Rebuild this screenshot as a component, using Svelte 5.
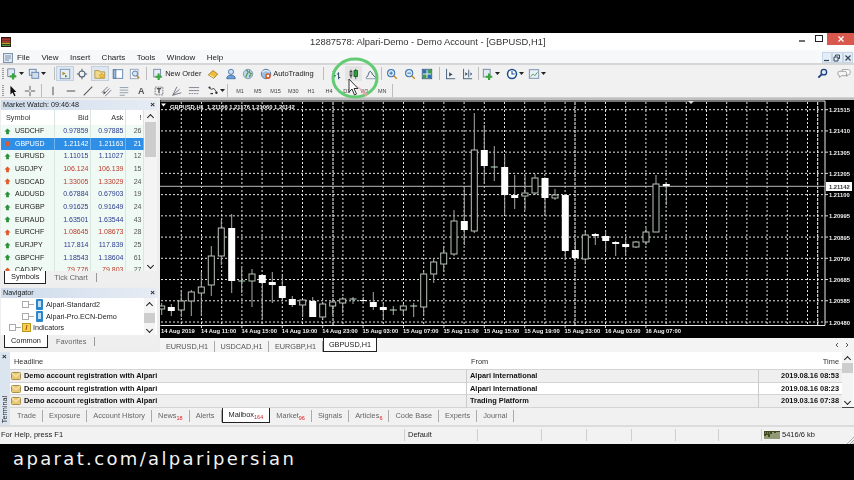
<script>
  const watch = [
    ['USDCHF','0.97859','0.97885','26','up','blue'],
    ['GBPUSD','1.21142','1.21163','21','down','sel'],
    ['EURUSD','1.11015','1.11027','12','up','blue'],
    ['USDJPY','106.124','106.139','15','down','red'],
    ['USDCAD','1.33005','1.33029','24','down','red'],
    ['AUDUSD','0.67884','0.67903','19','up','blue'],
    ['EURGBP','0.91625','0.91649','24','up','blue'],
    ['EURAUD','1.63501','1.63544','43','up','blue'],
    ['EURCHF','1.08645','1.08673','28','down','red'],
    ['EURJPY','117.814','117.839','25','up','blue'],
    ['GBPCHF','1.18543','1.18604','61','up','blue'],
    ['CADJPY','79.776','79.803','27','down','red']
  ];
  const mail = [
    ['Demo account registration with Alpari','Alpari International','2019.08.16 08:53'],
    ['Demo account registration with Alpari','Alpari International','2019.08.16 08:23'],
    ['Demo account registration with Alpari','Trading Platform','2019.03.16 07:38']
  ];
  const termTabs = [
    ['Trade',''],['Exposure',''],['Account History',''],['News','18'],['Alerts',''],['Mailbox','164'],
    ['Market','96'],['Signals',''],['Articles','6'],['Code Base',''],['Experts',''],['Journal','']
  ];
  const tf = ['M1','M5','M15','M30','H1','H4','D1','W1','MN'];

  // [x, high, bodyTop, bodyBottom, low, kind]  kind: w=filled, h=hollow, d=doji
  const candles = [
    [161.7,303,306,309,315,'h'],[171.3,304,307,311,316,'w'],[181.3,290,301,310,317,'h'],
    [191.3,290,292,301,316,'h'],[201.3,272,287,293,316,'h'],[211.3,246,256,285,296,'h'],
    [221.3,220,228,256,265,'h'],[231.7,214,228,281,293,'w'],[241.7,268,281,281,293,'d'],
    [252,269,274,281,307,'h'],[262.3,274,275,283,319,'w'],[272.3,272,282,285,303,'w'],
    [282.3,276,286,298,299,'w'],[292.3,296,299,305,307,'w'],[302.7,300,300,305,317,'h'],
    [312.7,297,301,317,317,'w'],[322.7,303,304,317,318,'h'],[332.7,300,302,306,315,'h'],
    [342.7,297,299,303,313,'h'],[353,297,299,300,304,'d'],[363.3,297,300,301,302,'w'],
    [373.3,292,302,307,310,'w'],[383.3,303,307,310,318,'w'],[393.3,306,310,310,315,'d'],
    [403.3,304,306,310,315,'h'],[413.7,303,306,306,317,'d'],[423.7,272,274,307,315,'h'],
    [433.7,258,262,274,283,'h'],[443.7,246,253,264,272,'h'],[454,210,221,254,256,'h'],
    [464.3,188,221,230,245,'w'],[474.3,113,150,231,233,'h'],[484.3,125,150,166,183,'w'],
    [494.3,146,167,167,181,'d'],[504.7,155,167,195,215,'w'],[514.7,175,195,198,209,'w'],
    [525,175,193,196,210,'h'],[535,174,178,193,195,'h'],[545,177,178,198,216,'w'],
    [555,189,195,198,200,'h'],[565.3,194,195,251,258,'w'],[575.3,241,250,258,260,'w'],
    [585.3,231,235,259,262,'h'],[595.3,233,234,236,245,'w'],[605.7,230,236,241,251,'w'],
    [615.7,241,242,244,256,'w'],[625.7,238,244,247,255,'w'],[636,241,242,247,248,'h'],
    [646,228,232,242,245,'h'],[656,175,184,232,232,'h'],[666.3,183,184,186,205,'w']
  ];
  const gridX = Array.from({ length: 32 }, (_, i) => 181.3 + i * 20.2);
  const seps = [333, 575, 817.7];
  const prices = ['1.21515','1.21410','1.21305','1.21205','1.21100','1.20995','1.20895','1.20790','1.20685','1.20585','1.20480'];
  const gridY = prices.map((_, i) => 109.7 + i * 21.23);
  const times = ['14 Aug 11:00','14 Aug 15:00','14 Aug 19:00','14 Aug 23:00','15 Aug 03:00','15 Aug 07:00','15 Aug 11:00','15 Aug 15:00','15 Aug 19:00','15 Aug 23:00','16 Aug 03:00','16 Aug 07:00'];
</script>

{#snippet arrow(c)}
  <svg class="arrow" viewBox="0 0 8 8"><path d="M4 .5 7.500 4H5.600v3H2.400V4H.5z" fill={c === 'up' ? '#2f8f3a' : '#e0592a'} /></svg>
{/snippet}

{#snippet caret()}
  <svg class="caret" viewBox="0 0 5 3"><path d="M0 0h5L2.500 3z" fill="#222" /></svg>
{/snippet}

<div class="screen">
  <div class="window">
    <header class="title">
      <svg class="logo" viewBox="0 0 12 12">
        <rect width="12" height="12" fill="#2a1c14" />
        <path d="M1 2.500h10M1 5h10" stroke="#d9413a" stroke-width="1.500" />
        <path d="M1 7.500h10" stroke="#e2b12f" stroke-width="1.500" />
        <path d="M1 10h10" stroke="#4aa04a" stroke-width="1.500" />
      </svg>
      <span class="title-text">12887578: Alpari-Demo - Demo Account - [GBPUSD,H1]</span>
      <div class="win-btns">
        <span class="wb"><svg viewBox="0 0 10 10"><path d="M2 7h6" stroke="#222" stroke-width="1.300" /></svg></span>
        <span class="wb"><svg viewBox="0 0 10 10"><rect x="1.500" y="1.500" width="7" height="6" fill="none" stroke="#222" /></svg></span>
        <span class="wb close"><svg viewBox="0 0 10 10"><path d="M2.500 2.500l5 5m0-5l-5 5" stroke="#fff" stroke-width="1.300" /></svg></span>
      </div>
    </header>

    <nav class="menu">
      <svg class="doc" viewBox="0 0 10 10"><rect x=".5" y=".5" width="9" height="9" fill="#dde6f2" stroke="#7f93ad" /><path d="M2 3h6M2 5h6M2 7h4" stroke="#7f93ad" /></svg>
      <span>File</span><span>View</span><span>Insert</span><span>Charts</span><span>Tools</span><span>Window</span><span>Help</span>
      <div class="mdi">
        <span><svg viewBox="0 0 8 8"><path d="M1 6.500h5" stroke="#345" stroke-width="1.200" /></svg></span>
        <span><svg viewBox="0 0 8 8"><path d="M2.500 2.500V1h4v3.500H5M1 3h4v4H1z" fill="none" stroke="#345" /></svg></span>
        <span><svg viewBox="0 0 8 8"><path d="M1.500 1.500l5 5m0-5l-5 5" stroke="#345" stroke-width="1.200" /></svg></span>
      </div>
    </nav>

    <div class="bar bar1">
      <i class="grip"></i>
      <span class="b w20"><svg viewBox="0 0 14 14"><path d="M2 1h8v9H2z" fill="#dfe8f3" stroke="#6a7f9b" /><path d="M7 6h2.500V8.500H12V11H9.500v2.500H7V11H4.500V8.500H7z" fill="#38a63c" /></svg>{@render caret()}</span>
      <span class="b w20 ml2"><svg viewBox="0 0 14 14"><rect x="1.500" y="1.500" width="8" height="7" fill="#dfe8f3" stroke="#5d7da5" /><rect x="4.500" y="5" width="8" height="7" fill="#cfdcec" stroke="#5d7da5" /></svg>{@render caret()}</span>
      <i class="sep s1"></i>
      <span class="b on"><svg viewBox="0 0 14 14"><rect x="1.500" y="1.500" width="11" height="11" fill="#e6eef7" stroke="#7590b0" /><path d="M4 4.500l4 2-4 2z" fill="#b98a2a" /><path d="M7 8l3 1.500L7 11z" fill="#3a9a3f" /></svg></span>
      <span class="b"><svg viewBox="0 0 14 14"><circle cx="7" cy="7" r="3.500" fill="none" stroke="#4e5e70" stroke-width="1.200" /><path d="M7 1v3M7 10v3M1 7h3M10 7h3" stroke="#4e5e70" stroke-width="1.200" /></svg></span>
      <span class="b on"><svg viewBox="0 0 14 14"><path d="M1 3h5l1 1.500h5.500V12H1z" fill="#f2d98a" stroke="#b5923c" /><path d="M9 6l1 2 2 .3-1.500 1.400.4 2L9 10.800l-1.900.9.4-2L6 8.300 8 8z" fill="#f6c63c" stroke="#a87f20" stroke-width=".5" /></svg></span>
      <span class="b"><svg viewBox="0 0 14 14"><rect x="1.500" y="2" width="11" height="10" fill="#fff" stroke="#5378a8" /><rect x="1.500" y="2" width="3" height="10" fill="#9cb9dc" stroke="#5378a8" /></svg></span>
      <span class="b"><svg viewBox="0 0 14 14"><rect x="1.500" y="1.500" width="9" height="11" fill="#f3f6fa" stroke="#8ba0b8" /><circle cx="7" cy="6.500" r="3" fill="#d8e8f6" stroke="#4b6f96" /><path d="M9 9l3 3" stroke="#b9862a" stroke-width="1.500" /></svg></span>
      <i class="sep s2"></i>
      <span class="b txt wOrder"><svg viewBox="0 0 14 14"><rect x="2" y="1.500" width="8" height="9" fill="#e4ecf5" stroke="#6f86a3" /><path d="M6.500 6.500h2.500V9h2.500v2.500H9V14H6.500v-2.500H4V9h2.500z" fill="#38a63c" /></svg><em>New Order</em></span>
      <span class="b"><svg viewBox="0 0 14 14"><path d="M1.500 8 7 3l5.500 4L8 12z" fill="#eebf3e" stroke="#a87c1f" /><path d="M3 8l5 3" stroke="#fff1b8" /></svg></span>
      <span class="b"><svg viewBox="0 0 14 14"><circle cx="7" cy="4.500" r="3" fill="#cfe0f3" stroke="#3d6ea8" /><path d="M2 12.500c0-3 2-4 5-4s5 1 5 4z" fill="#6fa0d8" stroke="#3d6ea8" /></svg></span>
      <span class="b"><svg viewBox="0 0 14 14"><circle cx="7" cy="7" r="5.500" fill="#bcd6ec" stroke="#7a93aa" /><path d="M5 2.500c2 1 2.500 2.500 1.500 4S4 8.500 5 11M9 3c-1 2 0 3 2.500 3.500M9 11c-.5-1.500 0-3 2-3" fill="none" stroke="#55964c" stroke-width="1.400" /></svg></span>
      <span class="b txt wAuto"><svg viewBox="0 0 14 14"><circle cx="7" cy="7" r="5.500" fill="#9cc0e2" stroke="#44719f" /><path d="M2.500 5c3-2.500 6-2.500 9 0" fill="none" stroke="#e9f2fa" stroke-width="1.500" /><rect x="6" y="6" width="6.500" height="6.500" rx="3" fill="#df5b2c" /><rect x="8" y="8" width="2.500" height="2.500" fill="#fff" /></svg><em>AutoTrading</em></span>
      <i class="sep s3"></i>
      <span class="b"><svg viewBox="0 0 14 14"><path d="M5 2v9M5 4H3M5 9h2M10 5v8M10 7H8M10 11h2" stroke="#33506f" stroke-width="1.200" fill="none" /></svg></span>
      <span class="b hot"><svg viewBox="0 0 14 14"><path d="M3.500 2v10" stroke="#333" /><rect x="2.500" y="4" width="2" height="5" fill="#fff" stroke="#333" /><path d="M9 1v12" stroke="#145f20" /><rect x="7" y="3" width="4" height="7" fill="#2c9e39" stroke="#145f20" /></svg></span>
      <span class="b"><svg viewBox="0 0 14 14"><path d="M1 11c3 0 3-7 5-7s3 6 7 7" fill="none" stroke="#33506f" stroke-width="1.100" /><path d="M1 12.500h12" stroke="#7f93ad" /></svg></span>
      <i class="sep s4"></i>
      <span class="b"><svg viewBox="0 0 14 14"><circle cx="6" cy="6" r="4.200" fill="#d8e9f8" stroke="#3f76b5" stroke-width="1.200" /><path d="M4 6h4M6 4v4" stroke="#2b5f9e" /><path d="M9 9l3.500 3.500" stroke="#c1902c" stroke-width="1.800" /></svg></span>
      <span class="b"><svg viewBox="0 0 14 14"><circle cx="6" cy="6" r="4.200" fill="#d8e9f8" stroke="#3f76b5" stroke-width="1.200" /><path d="M4 6h4" stroke="#2b5f9e" /><path d="M9 9l3.500 3.500" stroke="#c1902c" stroke-width="1.800" /></svg></span>
      <span class="b"><svg viewBox="0 0 14 14"><rect x="1.500" y="1.500" width="11" height="11" fill="#fff" stroke="#2f4f74" /><rect x="2" y="2" width="4.500" height="4.500" fill="#2e6fb8" /><rect x="7.500" y="2" width="4.500" height="4.500" fill="#3d9f4b" /><rect x="2" y="7.500" width="4.500" height="4.500" fill="#3d9f4b" /><rect x="7.500" y="7.500" width="4.500" height="4.500" fill="#2e6fb8" /></svg></span>
      <i class="sep s5"></i>
      <span class="b"><svg viewBox="0 0 14 14"><path d="M3 1v12M3 12.500h10" stroke="#33506f" /><path d="M6 5l4 2.500-4 2.500z" fill="#33506f" /></svg></span>
      <span class="b"><svg viewBox="0 0 14 14"><path d="M3 1v12M3 12.500h10M9 2v9" stroke="#33506f" /><path d="M5 5l3 2-3 2zM11 5l2 2-2 2z" fill="#33506f" /></svg></span>
      <i class="sep s8"></i>
      <span class="b w22"><svg viewBox="0 0 14 14"><rect x="1.500" y="1.500" width="8" height="9" fill="#dfe8f3" stroke="#6a7f9b" /><path d="M7 6.500h2.500V9H12v2.500H9.500V14H7v-2.500H4.500V9H7z" fill="#38a63c" /></svg>{@render caret()}</span>
      <span class="b w22 ml2"><svg viewBox="0 0 14 14"><circle cx="7" cy="7" r="5.200" fill="#fff" stroke="#1c4f93" stroke-width="1.800" /><path d="M7 3.500V7h3" stroke="#1c4f93" stroke-width="1.300" fill="none" /></svg>{@render caret()}</span>
      <span class="b w22"><svg viewBox="0 0 14 14"><rect x="1.500" y="2" width="11" height="10" fill="#e7eef6" stroke="#6d87a6" /><path d="M3 10l3-3 2 2 3-4" fill="none" stroke="#4d8f4f" /></svg>{@render caret()}</span>
      <span class="spring"></span>
      <svg class="mag" viewBox="0 0 12 12"><circle cx="7.500" cy="4.500" r="3" fill="#dbe9f7" stroke="#173e7d" stroke-width="1.400" /><path d="M5 7l-3.500 3.500" stroke="#173e7d" stroke-width="2" /></svg>
      <svg class="chat" viewBox="0 0 16 12"><path d="M6 1.500h7a2 2 0 0 1 2 2v2a2 2 0 0 1-2 2h-1l-1 2v-2H6z" fill="#fff" stroke="#9b9b9b" /><path d="M3 3.500h6a2 2 0 0 1 2 2v1a2 2 0 0 1-2 2H5l-2 2v-2a2 2 0 0 1-2-2v-1a2 2 0 0 1 2-2z" fill="#f4f4f4" stroke="#9b9b9b" /></svg>
    </div>

    <div class="bar bar2">
      <i class="grip"></i>
      <span class="b"><svg viewBox="0 0 14 14"><path d="M4 1v10l2.500-2.300L8.500 13l1.500-.7-2-4.200H11z" fill="#111" /></svg></span>
      <span class="b"><svg viewBox="0 0 14 14"><path d="M7 1v5M7 8v5M1 7h5M8 7h5" stroke="#444" /></svg></span>
      <i class="sep s6"></i>
      <span class="b"><svg viewBox="0 0 14 14"><path d="M7 2v10" stroke="#555" stroke-width="1.200" /></svg></span>
      <span class="b"><svg viewBox="0 0 14 14"><path d="M2 7h10" stroke="#555" stroke-width="1.200" /></svg></span>
      <span class="b"><svg viewBox="0 0 14 14"><path d="M2 12 12 2" stroke="#555" stroke-width="1.200" /></svg></span>
      <span class="b"><svg viewBox="0 0 14 14"><path d="M2 9l7-7M4 11l7-7M6 13l7-7" stroke="#667" /><circle cx="5" cy="9" r="1.300" fill="#555" /></svg></span>
      <span class="b"><svg viewBox="0 0 14 14"><path d="M2 3h10M2 6h10M2 9h10M2 12h6" stroke="#8593a3" /></svg></span>
      <span class="b"><b class="glyph">A</b></span>
      <span class="b"><svg viewBox="0 0 14 14"><rect x="2.500" y="2.500" width="9" height="9" fill="none" stroke="#667" stroke-dasharray="2 1" /><path d="M4.500 4.500h5M7 4.500v5" stroke="#222" stroke-width="1.200" /></svg></span>
      <span class="b"><svg viewBox="0 0 14 14"><path d="M2 12l5-10M2 12l8-7M2 12l10-3" stroke="#667" /></svg></span>
      <span class="b"><svg viewBox="0 0 14 14"><path d="M1 3h12M1 6.500h12" stroke="#778" /><path d="M1 10h12" stroke="#778" stroke-dasharray="2 1" /></svg></span>
      <span class="b w22 ml2"><svg viewBox="0 0 14 14"><path d="M2 3l3 2 3-1 3 4" fill="none" stroke="#333" /><circle cx="3" cy="3" r="1.200" fill="#333" /><circle cx="11" cy="9" r="1.400" fill="#333" /><path d="M4 10h3" stroke="#333" stroke-width="1.500" /></svg>{@render caret()}</span>
      <i class="sep s7"></i>
      {#each tf as t}<span class="b tf">{t}</span>{/each}
      <i class="sep"></i>
    </div>

    <div class="main">
      <aside class="left">
        <section class="mw">
          <div class="ptitle"><span>Market Watch: 09:46:48</span><b>×</b></div>
          <div class="tbl-wrap">
            <div class="tbl">
              <div class="row head"><span class="sym">Symbol</span><span>Bid</span><span>Ask</span><span>!</span></div>
              {#each watch as r}
                <div class="row" class:selected={r[5] === 'sel'}>
                  <span class="sym">{@render arrow(r[4])}{r[0]}</span>
                  <span class={r[5]}>{r[1]}</span>
                  <span class={r[5]}>{r[2]}</span>
                  <span class="sp">{r[3]}</span>
                </div>
              {/each}
            </div>
            <div class="scroll"><i class="up"></i><i class="thumb t1"></i><i class="dn"></i></div>
          </div>
          <div class="ptabs"><span class="act">Symbols</span><span>Tick Chart</span><i></i></div>
        </section>
        <section class="nav">
          <div class="ptitle"><span>Navigator</span><b>×</b></div>
          <div class="tree-wrap">
            <div class="tree">
              <div class="node l2"><i class="plus"></i><i class="dash"></i><svg viewBox="0 0 9 11"><rect x="1" width="7" height="11" rx="1" fill="#2e86c8" /><rect x="3" y="2" width="3" height="6" fill="#bfe0f5" /></svg><span>Alpari-Standard2</span></div>
              <div class="node l2"><i class="plus"></i><i class="dash"></i><svg viewBox="0 0 9 11"><rect x="1" width="7" height="11" rx="1" fill="#2e86c8" /><rect x="3" y="2" width="3" height="6" fill="#bfe0f5" /></svg><span>Alpari-Pro.ECN-Demo</span></div>
              <div class="node l1"><i class="plus"></i><i class="dash"></i><svg viewBox="0 0 9 11"><rect x=".5" y="1.500" width="8" height="8" fill="#f5d24c" stroke="#b99622" /><path d="M4 8l1-5" stroke="#a34a10" /></svg><span>Indicators</span></div>
            </div>
            <div class="scroll"><i class="up"></i><i class="thumb t2"></i><i class="dn"></i></div>
          </div>
          <div class="ptabs"><span class="act">Common</span><span>Favorites</span><i></i></div>
        </section>
      </aside>

      <section class="chartcol">
        <svg class="chart" viewBox="160 98 694 240">
          <rect x="160" y="98" width="694" height="240" fill="#000" />
          <path d="M160 99h694" stroke="#fff" stroke-width="1.500" />
          {#each gridX as x}<line x1={x} x2={x} y1="102" y2="325" class="grid" />{/each}
          {#each gridY as y}<line x1="161" x2="825" y1={y} y2={y} class="grid" />{/each}
          {#each seps as x}<line x1={x} x2={x} y1="102" y2="325" class="sepl" />{/each}
          <line x1="160" x2="825" y1="186.300" y2="186.300" stroke="#b9b9b9" />
          {#each candles as [x, hi, top, bot, lo, k]}
            <line x1={x} x2={x} y1={hi} y2={lo} class="wick" />
            {#if k === 'd'}
              <line x1={x - 3.500} x2={x + 3.500} y1={top} y2={top} stroke="#bfe8c8" />
            {:else if k === 'w'}
              <rect x={x - 3.500} y={top} width="7" height={bot - top} fill="#fff" />
            {:else}
              <rect x={x - 3} y={top} width="6" height={bot - top} fill="#000" stroke="#b9c4b9" />
            {/if}
          {/each}
          <path d="M160.500 101H825V325.500H160.500" fill="none" stroke="#e8e8e8" />
          <path d="M161 103.500h5l-2.500 3z" fill="#fff" />
          <path d="M688 101h6l-3 3z" fill="#ddd" />
          <text x="170" y="108.500" class="ohlc">GBPUSD,H1  1.21156 1.21176 1.21060 1.21142</text>
          {#each prices as p, i}
            <line x1="825" x2="828" y1={gridY[i]} y2={gridY[i]} stroke="#ddd" />
            <text x="829" y={gridY[i] + 2.500} class="ax">{p}</text>
          {/each}
          <rect x="826" y="182" width="26" height="9" fill="#fff" />
          <text x="829" y="189" class="ax cur">1.21142</text>
          <text x="161" y="333" class="ax">14 Aug 2019</text>
          {#each times as t, i}
            <line x1={201.500 + i * 40.400} x2={201.500 + i * 40.400} y1="325" y2="328" stroke="#ddd" />
            <text x={201 + i * 40.400} y="333" class="ax">{t}</text>
          {/each}
        </svg>
        <div class="ctabs">
          <span>EURUSD,H1</span><span>USDCAD,H1</span><span>EURGBP,H1</span><span class="act">GBPUSD,H1</span>
          <div class="chev"><svg viewBox="0 0 4 6"><path d="M3 1 1 3l2 2" fill="none" stroke="#555" /></svg><svg viewBox="0 0 4 6"><path d="m1 1 2 2-2 2" fill="none" stroke="#555" /></svg></div>
        </div>
      </section>
    </div>

    <section class="terminal">
      <div class="vlabel"><b>×</b><span>Terminal</span></div>
      <div class="tbody">
        <div class="mailwrap">
          <div class="mail">
            <div class="mrow mhead"><span>Headline</span><span>From</span><span class="t">Time</span></div>
            {#each mail as m}
              <div class="mrow item">
                <span class="hl"><svg viewBox="0 0 10 8"><rect x=".5" y=".5" width="9" height="7" rx="1" fill="#e8c977" stroke="#a8904b" /><path d="M1 1l4 3.500L9 1" fill="none" stroke="#fff3c9" /></svg>{m[0]}</span>
                <span>{m[1]}</span>
                <span class="t">{m[2]}</span>
              </div>
            {/each}
          </div>
          <div class="scroll tsc"><i class="up"></i><i class="thumb t3"></i><i class="dn"></i></div>
        </div>
        <div class="ttabs">
          {#each termTabs as [name, n]}
            <span class:act={name === 'Mailbox'}>{name}{#if n}<sub>{n}</sub>{/if}</span>
          {/each}
        </div>
      </div>
    </section>

    <footer class="status">
      <span class="s-a">For Help, press F1</span>
      <span class="s-b">Default</span>
      <span class="s-c"></span><span class="s-d"></span><span class="s-e"></span><span class="s-f"></span><span class="s-g"></span><span class="s-g"></span>
      <span class="s-h"><svg viewBox="0 0 16 8"><rect width="16" height="8" fill="#3f4a20" /><path d="M1 8V5M3 8V4M5 8V6M7 8V3M9 8V1M11 8V2M13 8V1M15 8V1" stroke="#e5e8c8" /><path d="M1 2h6" stroke="#c7b33a" stroke-dasharray="1 1" /></svg>5416/6 kb</span>
      <svg class="gripper" viewBox="0 0 8 8"><path d="M8 1 1 8M8 4 4 8M8 6.500 6.500 8" stroke="#aaa" /></svg>
    </footer>
  </div>

  <p class="brand">aparat.com/alparipersian</p>

  <svg class="pointer" viewBox="0 0 60 50">
    <ellipse cx="24" cy="21" rx="22" ry="19" fill="none" stroke="#62cb74" stroke-width="3" />
    <path d="M25 28l12 9-2 3z" fill="#eaa3a8" opacity=".8" />
    <path d="M18 22v13l3-3 2.500 6 2-1-2.500-5.500h4z" fill="#fff" stroke="#333" />
  </svg>
</div>

<style>
  :global(body) { margin: 0; background: #000; }
  .screen {
    position: relative; width: 854px; height: 480px; overflow: hidden;
    background: #000; padding-top: 33px; box-sizing: border-box;
    font-family: "Liberation Sans", Arial, sans-serif;
  }
  .window {
    width: 854px; height: 411px; display: flex; flex-direction: column;
    background: #f0f0f0; color: #222; font-size: 7.500px; filter: blur(.3px);
  }
  .title { height: 17px; flex: none; display: flex; align-items: center; background: #fff; position: relative; }
  .logo { width: 10px; height: 10px; margin: 0 0 0 1px; }
  .title-text { position: absolute; left: 310px; top: 3px; font-size: 9.400px; color: #333; white-space: nowrap; }
  .win-btns { margin-left: auto; display: flex; align-items: flex-start; align-self: flex-start; }
  .wb { width: 17px; height: 12px; display: flex; align-items: center; justify-content: center; }
  .wb svg { width: 10px; height: 10px; }
  .wb.close { width: 27px; background: #d8584e; }
  .menu {
    height: 15px; flex: none; display: flex; align-items: center; background: #f7f8f9;
    border-bottom: 2px solid #d6d6d6; box-sizing: border-box; font-size: 8px; padding: 2px 0 0 3px;
  }
  .menu > span { margin-right: 11.500px; }
  .doc { width: 10px; height: 10px; margin-right: 4px; }
  .mdi { margin-left: auto; display: flex; margin-right: 1px; }
  .mdi span { width: 10.500px; height: 11px; border: 1px solid #c7d6e6; background: #e3edf7; display: flex; align-items: center; justify-content: center; box-sizing: border-box; }
  .mdi svg { width: 8px; height: 8px; }

  .bar { flex: none; display: flex; align-items: center; background: #f1f1f1; }
  .bar1 { height: 17px; }
  .bar2 { height: 16px; border-bottom: 1px solid #cfcfcf; box-sizing: border-box; padding-top: 2px; }
  .grip { width: 2px; height: 12px; margin: 0 1px 0 2px; background: repeating-linear-gradient(#999 0 1px, #eee 1px 2px); flex: none; }
  .bar2 .grip { margin-right: 0; }
  .sep { width: 1px; height: 13px; background: #bdbdbd; flex: none; margin: 0 1px; }
  .sep.s1 { margin: 0 1px 0 7px; }
  .sep.s2 { margin: 0 3px 0 2px; }
  .sep.s3 { margin: 0 3px 0 6px; }
  .sep.s4 { margin: 0 1px; }
  .sep.s5 { margin: 0 1px 0 3px; }
  .sep.s8 { margin: 0 1px 0 2px; }
  .sep.s6 { margin: 0 2px; }
  .sep.s7 { margin: 0 3px 0 0; }
  .b { width: 17.650px; height: 15px; display: flex; align-items: center; justify-content: center; flex: none; box-sizing: border-box; }
  .bar2 .b { height: 13px; }
  .b > svg:first-child { width: 12px; height: 12px; flex: none; }
  .b.w20 { width: 20px; gap: 1px; }
  .b.w22 { width: 22px; gap: 1px; }
  .ml2 { margin-left: 2px; }
  .b.on { background: #dfe8f2; border: 1px solid #c3cfdc; }
  .b.hot { background: #e4e4e4; }
  .caret { width: 5px; height: 3px; flex: none; }
  .b.txt { justify-content: flex-start; padding-left: 2px; }
  .txt em { font-style: normal; font-size: 7.500px; margin-left: 1px; white-space: nowrap; }
  .wOrder { width: 54px; }
  .wAuto { width: 59px; margin-left: 1px; }
  .spring { flex: 1; }
  .mag { width: 11px; height: 11px; margin-right: 9px; }
  .chat { width: 14px; height: 11px; margin-right: 3px; }
  .glyph { font: 700 9px "Liberation Sans", sans-serif; color: #555; }
  .tf { font-size: 5.500px; color: #444; width: 17.800px; }

  .main { height: 254px; flex: none; display: grid; grid-template-columns: 160px 1fr; }
  .left { display: flex; flex-direction: column; padding: 2px 3px 0 1px; box-sizing: border-box; gap: 3px; background: #eee; }
  .mw { height: 185px; display: flex; flex-direction: column; }
  .nav { height: 60px; display: flex; flex-direction: column; }
  .ptitle { height: 10px; flex: none; box-sizing: border-box; display: flex; justify-content: space-between; align-items: center; padding: 0 1px 1px 2px; font-size: 7.200px; background: linear-gradient(90deg, #cfdcec, #e6ecf4); }
  .ptitle b { font: 700 8px "Liberation Sans", sans-serif; margin-right: 1px; }
  .tbl-wrap { height: 161px; flex: none; display: flex; background: #fff; overflow: hidden; }
  .tbl { width: 143px; flex: none; }
  .row { height: 12.670px; display: grid; grid-template-columns: 54px 36px 35px 18px; font-size: 7px; background: #f0faf4; }
  .row span { text-align: right; padding-right: 1.500px; line-height: 12.670px; border-right: 1px solid #dbe5df; box-sizing: border-box; white-space: nowrap; }
  .row .sym { text-align: left; padding-left: 3px; display: flex; align-items: center; gap: 4px; }
  .head { background: #fff; height: 15px; font-size: 7.300px; }
  .head span { line-height: 15px; color: #333; }
  .head .sym { padding-left: 5px; }
  .arrow { width: 7px; height: 7px; flex: none; }
  .blue { color: #2a3a8e; }
  .red { color: #bb3a2c; }
  .sp { color: #555; }
  .selected { background: #2f8fe6; color: #fff; }
  .selected span { color: #fff; border-right-color: #6eb2ee; }
  .scroll { width: 13px; flex: none; display: flex; flex-direction: column; background: #f4f4f4; position: relative; align-items: center; }
  .scroll i { display: block; }
  .up, .dn { width: 4px; height: 4px; border-left: 1.500px solid #222; border-top: 1.500px solid #222; transform: rotate(45deg); margin-top: 5px; flex: none; }
  .dn { transform: rotate(225deg); margin: auto 0 3px; }
  .thumb { width: 11px; background: #cdcdcd; margin-top: 2px; flex: none; }
  .t1 { height: 35px; }
  .t2 { height: 10px; margin-top: 5px; }
  .t3 { height: 10px; margin-top: 1px; }
  .ptabs { height: 13px; flex: none; display: flex; align-items: center; font-size: 7.400px; color: #666; background: #efefef; }
  .ptabs span { padding: 0 8px; line-height: 12px; }
  .ptabs i { width: 1px; height: 9px; background: #999; }
  .ptabs .act { background: #fff; color: #222; border: 1px solid #222; border-top: none; border-bottom-width: 1.500px; margin-left: 3px; padding: 0 6px; line-height: 12px; }
  .tree-wrap { height: 37px; flex: none; display: flex; background: #fff; }
  .tree { flex: 1; font-size: 7.200px; padding-top: 1px; overflow: hidden; }
  .node { display: flex; align-items: center; height: 11.500px; white-space: nowrap; }
  .node svg { width: 9px; height: 11px; margin-right: 2px; flex: none; }
  .l2 { padding-left: 21px; }
  .l1 { padding-left: 8px; }
  .plus { width: 5px; height: 5px; border: 1px solid #aaa; flex: none; }
  .dash { width: 5px; height: 1px; background: #aaa; margin-right: 1px; flex: none; }
  .tree-wrap .scroll { width: 11px; margin-right: 2px; }

  .chartcol { display: flex; flex-direction: column; min-width: 0; }
  .chart { display: block; width: 694px; height: 240px; flex: none; }
  .grid { stroke: #e4e4e4; stroke-width: 1; stroke-dasharray: 2 2; }
  .sepl { stroke: #fff; stroke-width: 1; stroke-dasharray: 3 1; }
  .wick { stroke: #a8a8a8; stroke-width: 1; }
  .ax, .ohlc { font: 700 5.800px "Liberation Sans", sans-serif; fill: #f2f2f2; }
  .ohlc { white-space: pre; }
  .cur { fill: #333; }
  .ctabs { flex: 1; display: flex; align-items: flex-start; font-size: 7.300px; background: #f4f4f4; color: #555; }
  .ctabs span { width: 54px; text-align: center; line-height: 11px; margin-top: 3px; border-right: 1px solid #aaa; box-sizing: border-box; }
  .ctabs span:first-child { width: 55px; margin-left: 0; }
  .ctabs .act { background: #fff; color: #222; border: 1px solid #222; border-top: none; margin-top: 0; line-height: 13px; }
  .chev { margin-left: auto; margin-right: 5px; display: flex; gap: 6px; margin-top: 4px; }
  .chev svg { width: 4px; height: 6px; }

  .terminal { height: 73px; flex: none; display: flex; background: #f0f0f0; }
  .vlabel { width: 10px; flex: none; background: #dbe5f0; position: relative; }
  .vlabel b { position: absolute; left: 2px; top: 0; font: 700 8px "Liberation Sans", sans-serif; }
  .vlabel span { position: absolute; left: 0; bottom: 2px; writing-mode: vertical-rl; transform: rotate(180deg); font-size: 7.200px; line-height: 9px; }
  .tbody { flex: 1; display: flex; flex-direction: column; min-width: 0; }
  .mailwrap { height: 56px; flex: none; display: flex; background: #fff; border-bottom: 1px solid #444; box-sizing: border-box; }
  .mail { flex: 1; min-width: 0; }
  .mrow { display: grid; grid-template-columns: 456px 292px 1fr; border-bottom: 1px solid #d4d4d4; box-sizing: border-box; height: 12.600px; line-height: 12.500px; font-size: 7.400px; }
  .mrow span { padding-left: 3px; white-space: nowrap; }
  .mrow .t { text-align: right; padding-right: 3px; border-left: 1px solid #ccc; }
  .mhead { height: 18px; line-height: 19px; background: #fff; color: #333; }
  .mhead span { padding-left: 4px; }
  .mhead span:nth-child(2) { padding-left: 5px; }
  .mhead .t { border: none; }
  .item { font-weight: 700; color: #111; background: #fff; }
  .item:nth-child(even) { background: #efefef; }
  .item span:nth-child(2) { border-left: 1px solid #ccc; }
  .hl { display: flex; align-items: center; gap: 3px; }
  .item .hl { padding-left: 1px; }
  .hl svg { width: 10px; height: 8px; flex: none; }
  .tsc { width: 11px; margin-right: 1px; }
  .ttabs { flex: 1; display: flex; align-items: flex-start; font-size: 7.400px; color: #666; background: #f1f1f1; padding-left: 1px; }
  .ttabs span { padding: 0 6px; line-height: 12px; margin-top: 2px; border-right: 1px solid #aaa; white-space: nowrap; }
  .ttabs .act { background: #fff; color: #222; border: 1px solid #222; border-top: none; margin-top: 0; line-height: 14px; }
  sub { color: #d22; font-size: 5.500px; line-height: 0; }

  .status { height: 19px; flex: none; display: flex; align-items: center; background: #f2f2f2; border-top: 2px solid #dcdcdc; box-sizing: border-box; font-size: 7.500px; position: relative; padding-bottom: 2px; }
  .status span { height: 12px; line-height: 12px; border-right: 1px solid #cfcfcf; box-sizing: border-box; white-space: nowrap; flex: none; }
  .s-a { width: 405px; padding-left: 1px; }
  .s-b { width: 73px; padding-left: 3px; }
  .s-c { width: 64px; } .s-d { width: 45px; } .s-e { width: 45px; } .s-f { width: 44px; } .s-g { width: 43px; }
  .s-h { width: 80px; border: none !important; display: flex; align-items: center; gap: 2px; padding-left: 2px; }
  .s-h svg { width: 16px; height: 8px; }
  .gripper { position: absolute; right: 0; bottom: 0; width: 8px; height: 8px; }

  .brand { margin: 4px 0 0 13px; font: 400 18px/22px "DejaVu Sans", sans-serif; letter-spacing: 2.350px; color: #f2f2f2; }
  .pointer { position: absolute; left: 331px; top: 57px; width: 60px; height: 50px; }
</style>
